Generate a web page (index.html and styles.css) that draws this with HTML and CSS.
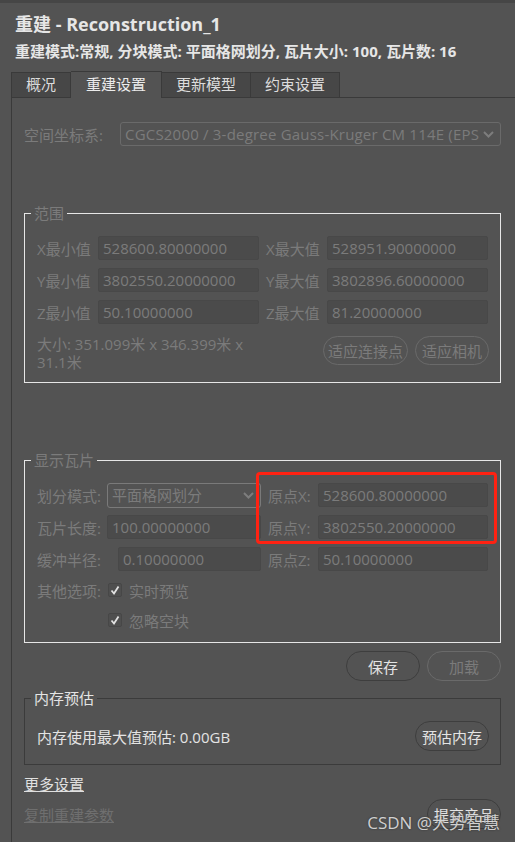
FILE: index.html
```html
<!DOCTYPE html>
<html lang="zh-CN">
<head>
    <meta charset="UTF-8">
    <title>重建 - Reconstruction_1</title>
    <link rel="stylesheet" href="styles.css">
</head>
<body>
    <div class="dialog">
        <div class="d_head">
            <h1>重建 - Reconstruction_1</h1>
            <p class="d_sub">重建模式:常规, 分块模式: 平面格网划分, 瓦片大小: 100, 瓦片数: 16</p>
        </div>
        <div class="tabs">
            <span class="tab">概况</span>
            <span class="tab active">重建设置</span>
            <span class="tab">更新模型</span>
            <span class="tab">约束设置</span>
        </div>
        <div class="panel">
            <div class="crs_row">
                <label class="dim">空间坐标系:</label>
                <div class="select crs_select">
                    <span class="sel_text">CGCS2000 / 3-degree Gauss-Kruger CM 114E (EPSG:4547)</span>
                    <svg class="chev" width="11" height="7" viewBox="0 0 11 7"><polyline points="1,1 5.5,5.5 10,1" fill="none" stroke="#7d7d7d" stroke-width="2"/></svg>
                </div>
            </div>

            <fieldset class="box box_light range">
                <legend class="dim">范围</legend>
                <div class="range_grid">
                    <label class="dim">X最小值</label><input class="field" value="528600.80000000" readonly>
                    <label class="dim r_lab">X最大值</label><input class="field" value="528951.90000000" readonly>
                    <label class="dim">Y最小值</label><input class="field" value="3802550.20000000" readonly>
                    <label class="dim r_lab">Y最大值</label><input class="field" value="3802896.60000000" readonly>
                    <label class="dim">Z最小值</label><input class="field" value="50.10000000" readonly>
                    <label class="dim r_lab">Z最大值</label><input class="field" value="81.20000000" readonly>
                </div>
                <div class="size_row">
                    <p class="size_text dim">大小: 351.099米 x 346.399米 x 31.1米</p>
                    <div class="btn_group">
                        <button class="pill pill_dim fit_btn">适应连接点</button>
                        <button class="pill pill_dim fit_btn">适应相机</button>
                    </div>
                </div>
            </fieldset>

            <fieldset class="box box_light tiles">
                <legend class="dim">显示瓦片</legend>
                <div class="tile_grid">
                    <label class="dim">划分模式:</label>
                    <div class="select mode_select">
                        <span class="sel_text">平面格网划分</span>
                        <svg class="chev" width="11" height="7" viewBox="0 0 11 7"><polyline points="1,1 5.5,5.5 10,1" fill="none" stroke="#7d7d7d" stroke-width="2"/></svg>
                    </div>
                    <label class="dim r_lab">原点X:</label><input class="field" value="528600.80000000" readonly>

                    <label class="dim">瓦片长度:</label><input class="field" value="100.00000000" readonly>
                    <label class="dim r_lab">原点Y:</label><input class="field" value="3802550.20000000" readonly>

                    <label class="dim">缓冲半径:</label><input class="field buf_field" value="0.10000000" readonly>
                    <label class="dim r_lab">原点Z:</label><input class="field" value="50.10000000" readonly>

                    <label class="dim">其他选项:</label>
                    <span class="check_item"><span class="check"><svg width="12" height="12" viewBox="0 0 12 12"><polyline points="2.5,6.5 5,9.5 9.5,2.5" fill="none" stroke="#e2e2e2" stroke-width="1.8"/></svg></span><span class="dim">实时预览</span></span>
                    <span class="check_item second"><span class="check"><svg width="12" height="12" viewBox="0 0 12 12"><polyline points="2.5,6.5 5,9.5 9.5,2.5" fill="none" stroke="#e2e2e2" stroke-width="1.8"/></svg></span><span class="dim">忽略空块</span></span>

                    <div class="mark"></div>
                </div>
            </fieldset>

            <div class="save_row">
                <button class="pill pill_dark">保存</button>
                <button class="pill pill_dim">加载</button>
            </div>

            <fieldset class="box box_dark mem">
                <legend>内存预估</legend>
                <div class="mem_row">
                    <span>内存使用最大值预估: 0.00GB</span>
                    <button class="pill pill_dark">预估内存</button>
                </div>
            </fieldset>

            <a class="more_link" href="#">更多设置</a>
            <div class="foot_row">
                <a class="copy_link" href="#">复制重建参数</a>
                <button class="pill pill_dark">提交产品</button>
            </div>
        </div>
        <div class="watermark">CSDN @大势智慧</div>
    </div>
</body>
</html>
```

FILE: styles.css
```css
* {
    box-sizing: border-box;
}
body {
    margin: 0;
    background-color: #535353;
    font-family: "Open Sans", "Noto Sans CJK SC", sans-serif;
    font-size: 15px;
    color: #e4e4e4;
}
.dialog {
    position: relative;
    height: 842px;
    overflow: hidden;
    border-top: 3px solid #464646;
}
.dim {
    color: #7b7b7b;
}

/* 标题 */
.d_head {
    padding: 9px 15px 0;
}
.d_head h1 {
    margin: 0;
    font-size: 18px;
    line-height: 24px;
    font-weight: bold;
    color: #e6e6e6;
}
.d_sub {
    margin: 5px 0 0;
    font-size: 15px;
    line-height: 20px;
    font-weight: bold;
    color: #e6e6e6;
}

/* 选项卡 */
.tabs {
    display: flex;
    align-items: flex-end;
    height: 26px;
    margin: 10px 0 0 11px;
}
.tab {
    height: 25px;
    padding: 0 14px;
    line-height: 23px;
    background-color: #474747;
    border: 1px solid #3a3a3a;
    border-bottom: 0;
    color: #dcdcdc;
}
.tab + .tab {
    border-left: 0;
}
.tab.active {
    position: relative;
    z-index: 1;
    height: 27px;
    margin-bottom: -1px;
    padding: 0 15px;
    line-height: 25px;
    background-color: #535353;
    color: #ececec;
}

.panel {
    height: 760px;
    margin-left: 11px;
    padding: 24px 14px 0 12px;
    border-left: 1px solid #3a3a3a;
    border-top: 1px solid #3a3a3a;
}

/* 表单元素 */
.crs_row {
    display: flex;
    align-items: center;
    height: 24px;
}
.crs_row label {
    width: 96px;
}
.select {
    display: flex;
    align-items: center;
    border: 1px solid #6a6a6a;
    border-radius: 3px;
    padding: 0 6px 0 4px;
    overflow: hidden;
}
.sel_text {
    flex: 1;
    white-space: nowrap;
    overflow: hidden;
    color: #7b7b7b;
    line-height: 22px;
}
.chev {
    flex: none;
    margin-left: 4px;
}
.crs_select {
    flex: 1;
    height: 24px;
}
.crs_select .sel_text {
    letter-spacing: 0.2px;
}
.field {
    width: 100%;
    height: 24px;
    margin: 0;
    padding: 0 4px;
    font: inherit;
    color: #7b7b7b;
    background-color: #4b4b4b;
    border: 1px solid #484848;
    border-radius: 2px;
    outline: none;
}

/* 分组框 */
.box {
    margin: 0;
    min-width: 0;
    padding: 14px 11px 11px 12px;
    border: 1px solid #e6e6e6;
}
.box legend {
    margin-left: -6px;
    padding: 0 3px;
    font-size: 15px;
    line-height: 18px;
}
.box_dark {
    border-color: #3b3b3b;
}
.range {
    margin-top: 58px;
}
.range_grid {
    display: grid;
    grid-template-columns: 61px 161px 68px 161px;
    grid-auto-rows: 24px;
    row-gap: 8px;
    align-items: center;
}
.r_lab {
    padding-left: 7px;
}
.size_row {
    display: flex;
    justify-content: space-between;
    align-items: flex-start;
    margin-top: 11px;
}
.size_text {
    width: 224px;
    margin: 0;
    line-height: 18px;
}
.btn_group {
    display: flex;
    gap: 7px;
    margin-top: 1px;
}

.pill {
    min-width: 74px;
    height: 30px;
    padding: 0 4px;
    font: inherit;
    background-color: transparent;
    border-radius: 15px;
    cursor: pointer;
}
.pill_dim {
    border: 1px solid #6a6a6a;
    color: #7b7b7b;
}
.pill_dark {
    border: 1px solid #3e3e3e;
    color: #e4e4e4;
}
.fit_btn {
    height: 29px;
}

.tiles {
    margin-top: 68px;
}
.tile_grid {
    position: relative;
    display: grid;
    grid-template-columns: 70px 154px 57px 170px;
    grid-template-rows: 24px 24px 24px 22px 22px;
    row-gap: 8px;
    align-items: center;
}
.mode_select {
    height: 25px;
    border-color: #7a7a7a;
}
.buf_field {
    width: 143px;
    margin-left: 11px;
}
.check_item {
    display: flex;
    align-items: center;
    grid-column: 2 / 5;
    padding-left: 1px;
}
.check {
    display: flex;
    align-items: center;
    justify-content: center;
    width: 14px;
    height: 14px;
    margin-right: 7px;
    background-color: #4f4f4f;
    border: 1px solid #474747;
    border-radius: 2px;
}
.mark {
    position: absolute;
    left: 219px;
    top: -11px;
    width: 241px;
    height: 72px;
    border: 3px solid #ff2212;
    border-radius: 4px;
}

.save_row {
    display: flex;
    justify-content: flex-end;
    gap: 7px;
    margin-top: 8px;
}

.mem {
    margin-top: 8px;
    padding-bottom: 13px;
}
.mem_row {
    display: flex;
    justify-content: space-between;
    align-items: center;
}

.more_link {
    display: inline-block;
    margin-top: 9px;
    line-height: 20px;
    color: #e0e0e0;
}
.foot_row {
    display: flex;
    justify-content: space-between;
    align-items: center;
    margin-top: 5px;
}
.copy_link {
    color: #6f6f6f;
}

.watermark {
    position: absolute;
    right: 15px;
    bottom: 9px;
    font-size: 17px;
    line-height: 20px;
    color: rgba(235, 235, 235, 0.85);
    text-shadow: 0 0 2px #333;
}
```
